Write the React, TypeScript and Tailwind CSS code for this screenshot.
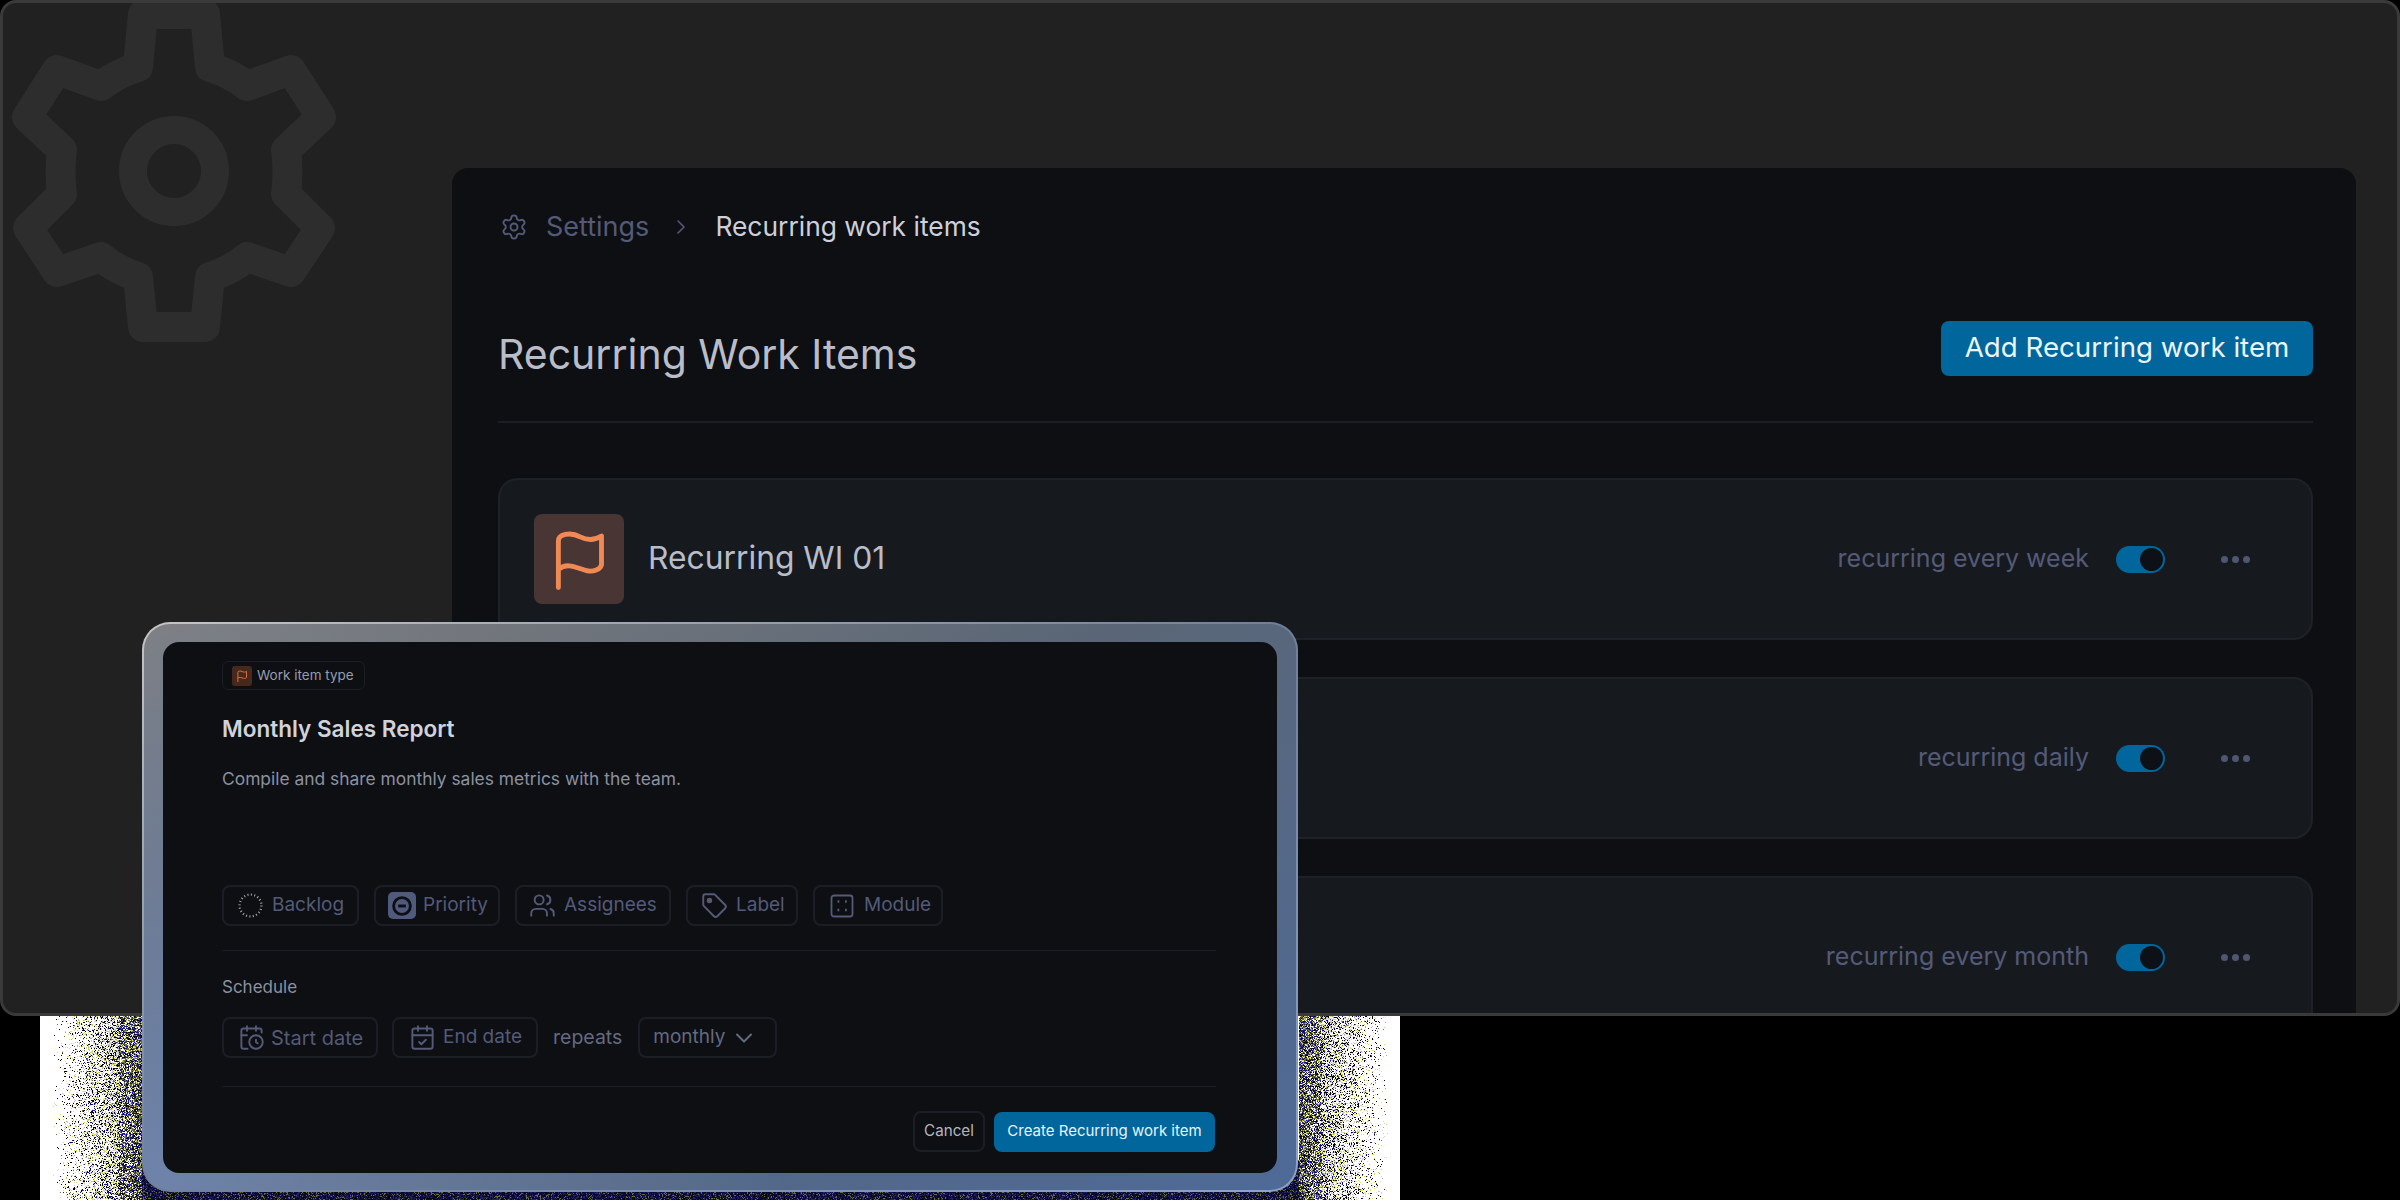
import { useMemo } from 'react'
import { CalendarCheck, CalendarClock, ChevronDown, ChevronRight, Settings, Tag, Users } from 'lucide-react'

const rows = [
  { label: 'recurring every week', title: 'Recurring WI 01' },
  { label: 'recurring daily' },
  { label: 'recurring every month' },
]

function FlagIcon({ className, strokeWidth = 1.3 }: { className?: string; strokeWidth?: number }) {
  return (
    <svg viewBox="0 0 24 24" fill="none" stroke="currentColor" strokeWidth={strokeWidth} strokeLinecap="round" strokeLinejoin="round" className={className}>
      <path d="M6.5 19.6V7.2C6.5 5.5 9.5 4.6 12.3 6.1C14.5 7.2 16.5 6.8 18 5.9V13.5C17.8 14.8 15.8 15.5 14 15.1C11.5 14.5 9 12.7 6.5 14.8" />
    </svg>
  )
}

function BigGear() {
  return (
    <svg viewBox="0 0 348 342" fill="none" stroke="#2d2d2d" strokeWidth="30" strokeLinejoin="round" className="h-[342px] w-[348px]">
      <path d="M143 14H205L210 67Q232 74 247 86L291 70L321 117L286 150Q289 172 286 194L320 228L291 272L247 257Q232 270 210 277L205 327H143L138 277Q116 270 101 257L57 272L28 228L62 194Q59 172 62 150L27 117L57 70L101 86Q116 74 138 67Z" />
      <circle cx="174" cy="171" r="41" strokeWidth="28" />
    </svg>
  )
}

// dithered speckle that sits behind the dialog, fades out to white away from it
function Speckle() {
  const paths = useMemo(() => {
    const palette = ['#000000', '#14148c', '#a9a9a9', '#d2d2d2', '#d9d95f', '#6b6b3a', '#23235e', '#0a0a3c']
    const out: string[] = palette.map(() => '')
    const mid = [0, 0, 0, 1, 2, 3, 3, 4, 4, 5]
    const near = [0, 0, 1, 1, 5, 5, 5, 6, 2, 4]
    const under = [7, 7, 7, 7, 6, 6, 0, 5]
    let seed = 90211
    const rand = () => {
      seed = (seed * 1664525 + 1013904223) >>> 0
      return seed / 4294967296
    }
    for (let y = 0; y < 184; y += 1) {
      for (let x = 0; x < 1360; x += 1) {
        const px = x + 40
        const py = y + 1016
        let d = 0
        let set = under
        if (px < 142) {
          d = 142 - px
          set = d < 24 ? near : mid
        } else if (px > 1298) {
          d = px - 1298
          set = d < 24 ? near : mid
        } else if (py < 1160) continue
        const p = set === under ? 1 : Math.pow(Math.max(0, 1 - d / 90), 1.1) * 0.95
        if (rand() > p) continue
        const i = set[Math.floor(rand() * set.length)]
        out[i] += `M${x} ${y}h1v1h-1z`
      }
    }
    return palette.map((fill, i) => ({ fill, d: out[i] }))
  }, [])
  return (
    <svg viewBox="0 0 1360 184" shapeRendering="crispEdges" className="absolute top-[1016px] left-[40px] h-[184px] w-[1360px] bg-white">
      {paths.map((p) => (
        <path key={p.fill} fill={p.fill} d={p.d} />
      ))}
    </svg>
  )
}

function Chip({ className, children }: { className: string; children: React.ReactNode }) {
  return (
    <div className={`flex h-[41px] items-center rounded-lg border-2 border-[#1b1e24] text-[19px] text-[#545a78] ${className}`}>
      {children}
    </div>
  )
}

function Toggle() {
  return (
    <div className="flex h-[27px] w-[49px] items-center justify-end rounded-full bg-[#01669c] pr-[2px]">
      <div className="h-[23px] w-[23px] rounded-full bg-[#0d1117]" />
    </div>
  )
}

function Dialog() {
  return (
    <div className="absolute top-[622px] left-[142px] h-[570px] w-[1156px] rounded-[28px] bg-linear-to-br from-[#c4c4c4] via-[#6f7f99] to-[#8fa3cc] p-[2px]">
      <div className="h-full rounded-[26px] bg-[radial-gradient(circle_at_0%_100%,#6f84ab_0%,transparent_50%),linear-gradient(150deg,#808080,#5a6676_45%,#4e6a98)] px-[19px] pt-[18px]">
        <div className="h-[531px] rounded-2xl bg-[#0d0f13] pt-[19px] pr-[59px] pl-[59px]">
          <div className="flex h-[29px] w-[143px] items-center gap-[5px] rounded-md border border-[#1b1e24] pl-[9px] text-[13.5px] text-[#989dac]">
            <div className="flex h-5 w-5 items-center justify-center rounded-[3px] bg-[#46281c] text-[#e0703c]">
              <FlagIcon className="h-[18px] w-[18px]" />
            </div>
            Work item type
          </div>
          <h3 className="mt-[25px] text-[22.5px] leading-7 font-semibold text-[#d0d3dc]">Monthly Sales Report</h3>
          <p className="mt-[24px] text-[17.4px] leading-6 text-[#8c91a0]">Compile and share monthly sales metrics with the team.</p>

          <div className="mt-[94px] flex gap-[15px]">
            <Chip className="w-[137px] gap-[9px] pl-[14px]">
              <svg viewBox="0 0 24 24" fill="none" stroke="#a4a4a4" strokeWidth="2.2" strokeDasharray="1 2.3" className="h-[25px] w-[25px]">
                <circle cx="12" cy="12" r="10.5" />
              </svg>
              Backlog
            </Chip>
            <Chip className="w-[126px] gap-[7px] pl-[12px]">
              <div className="flex h-[27px] w-[28px] items-center justify-center rounded-[5px] bg-[#4f5a7c]">
                <svg viewBox="0 0 20 20" fill="none" stroke="#0d0f13" strokeWidth="2.6" className="h-[22px] w-[22px]">
                  <circle cx="10" cy="10" r="7.6" />
                  <path d="M6.5 10H13.5" />
                </svg>
              </div>
              Priority
            </Chip>
            <Chip className="w-[156px] gap-[8px] pl-[12px]">
              <Users className="h-[27px] w-[27px]" strokeWidth={1.7} />
              Assignees
            </Chip>
            <Chip className="w-[112px] gap-[8px] pl-[13px]">
              <Tag className="h-[27px] w-[27px]" strokeWidth={1.7}>
                <circle cx="7.5" cy="7.5" r="1.6" fill="currentColor" />
              </Tag>
              Label
            </Chip>
            <Chip className="w-[130px] gap-[10px] pl-[15px]">
              <svg viewBox="0 0 24 24" fill="none" stroke="currentColor" strokeWidth="1.8" className="h-[24px] w-[24px]">
                <rect x="1.5" y="1.5" width="21" height="21" rx="2.5" />
                <path d="M7.5 7.5h1.8M15 7.5h1.8M7.5 16h1.8M15 16h1.8" strokeWidth="2.6" />
              </svg>
              Module
            </Chip>
          </div>
          <div className="mt-6 mr-[2px] h-px bg-[#1b1e24]" />
          <div className="mt-[24px] text-[17px] leading-6 text-[#8c91a0]">Schedule</div>
          <div className="mt-[18px] flex items-center text-[19.5px]">
            <Chip className="w-[156px] gap-[6px] pl-[14px] text-[20px]">
              <CalendarClock className="h-[27px] w-[27px]" strokeWidth={1.7} />
              Start date
            </Chip>
            <Chip className="ml-[14px] w-[146px] gap-[7px] pl-[15px] text-[19.6px]">
              <CalendarCheck className="h-[27px] w-[27px]" strokeWidth={1.7} />
              End date
            </Chip>
            <span className="ml-[15px] text-[#646a80]">repeats</span>
            <Chip className="ml-[16px] w-[139px] gap-[5px] pl-[13px] text-[19.6px] text-[#646a80]">
              monthly
              <ChevronDown className="h-[28px] w-[28px]" strokeWidth={1.7} />
            </Chip>
          </div>
          <div className="mt-[28px] mr-[2px] h-px bg-[#1b1e24]" />
          <div className="mt-[24px] flex items-center justify-end gap-[9px] pr-[3px]">
            <button className="h-[41px] w-[72px] rounded-lg border-2 border-[#1b1e24] text-[15.2px] text-[#b4b7c0]">Cancel</button>
            <button className="h-[40px] w-[221px] rounded-lg bg-[#01669c] text-[15px] text-[#e8f3fa]">Create Recurring work item</button>
          </div>
        </div>
      </div>
    </div>
  )
}

export default function App() {
  return (
    <div className="relative h-[1200px] w-[2400px] overflow-hidden bg-black [font-family:Inter,'Noto_Sans',sans-serif]">
      <div className="relative h-[1016px] overflow-hidden rounded-2xl border-[3px] border-[#3a3a3a] bg-[#212121] pt-[165px] pr-[41px] pl-[449px]">
        <div className="absolute top-[-3px] left-[-3px]">
          <BigGear />
        </div>
        <div className="relative h-[900px] rounded-2xl bg-[#0d0f13] pt-[44px] pr-[43px] pl-[46px]">
          <div className="flex h-[30px] items-center">
            <Settings className="ml-[2px] h-7 w-7 text-[#545a78]" strokeWidth={1.6} />
            <span className="ml-[18px] text-[27px] text-[#545a78]">Settings</span>
            <ChevronRight className="ml-5 h-6 w-6 text-[#545a78]" strokeWidth={1.6} />
            <span className="ml-[22px] text-[26.4px] text-[#cdd0da]">Recurring work items</span>
          </div>
          <div className="mt-[79px] flex h-[102px] items-start justify-between border-b-2 border-[#1b1e24]">
            <h1 className="mt-[8px] text-[41px] leading-[50px] text-[#b9bdc9]">Recurring Work Items</h1>
            <button className="h-[55px] w-[372px] rounded-lg bg-[#01669c] pb-[2px] text-[27.7px] text-[#eaf5fb]">Add Recurring work item</button>
          </div>
          <div className="mt-[55px] flex flex-col gap-[37px]">
            {rows.map((row) => (
              <div key={row.label} className="flex h-[162px] items-center rounded-[20px] border-2 border-[#1e2228] bg-[#161a1f] pr-[61px] pl-[34px]">
                <div className="flex h-[90px] w-[90px] items-center justify-center rounded-lg bg-[#4a3535] text-[#f08a55]">
                  <FlagIcon className="h-[90px] w-[90px]" />
                </div>
                {row.title && <span className="mb-[2px] ml-6 text-[31.8px] text-[#b9bdc9]">{row.title}</span>}
                <span className="mr-[27px] ml-auto text-[25px] text-[#545a78]">{row.label}</span>
                <Toggle />
                <div className="ml-[56px] flex gap-[4px]">
                  <div className="h-[7px] w-[7px] rounded-full bg-[#50566f]" />
                  <div className="h-[7px] w-[7px] rounded-full bg-[#50566f]" />
                  <div className="h-[7px] w-[7px] rounded-full bg-[#50566f]" />
                </div>
              </div>
            ))}
          </div>
        </div>
      </div>
      <Speckle />
      <Dialog />
    </div>
  )
}
